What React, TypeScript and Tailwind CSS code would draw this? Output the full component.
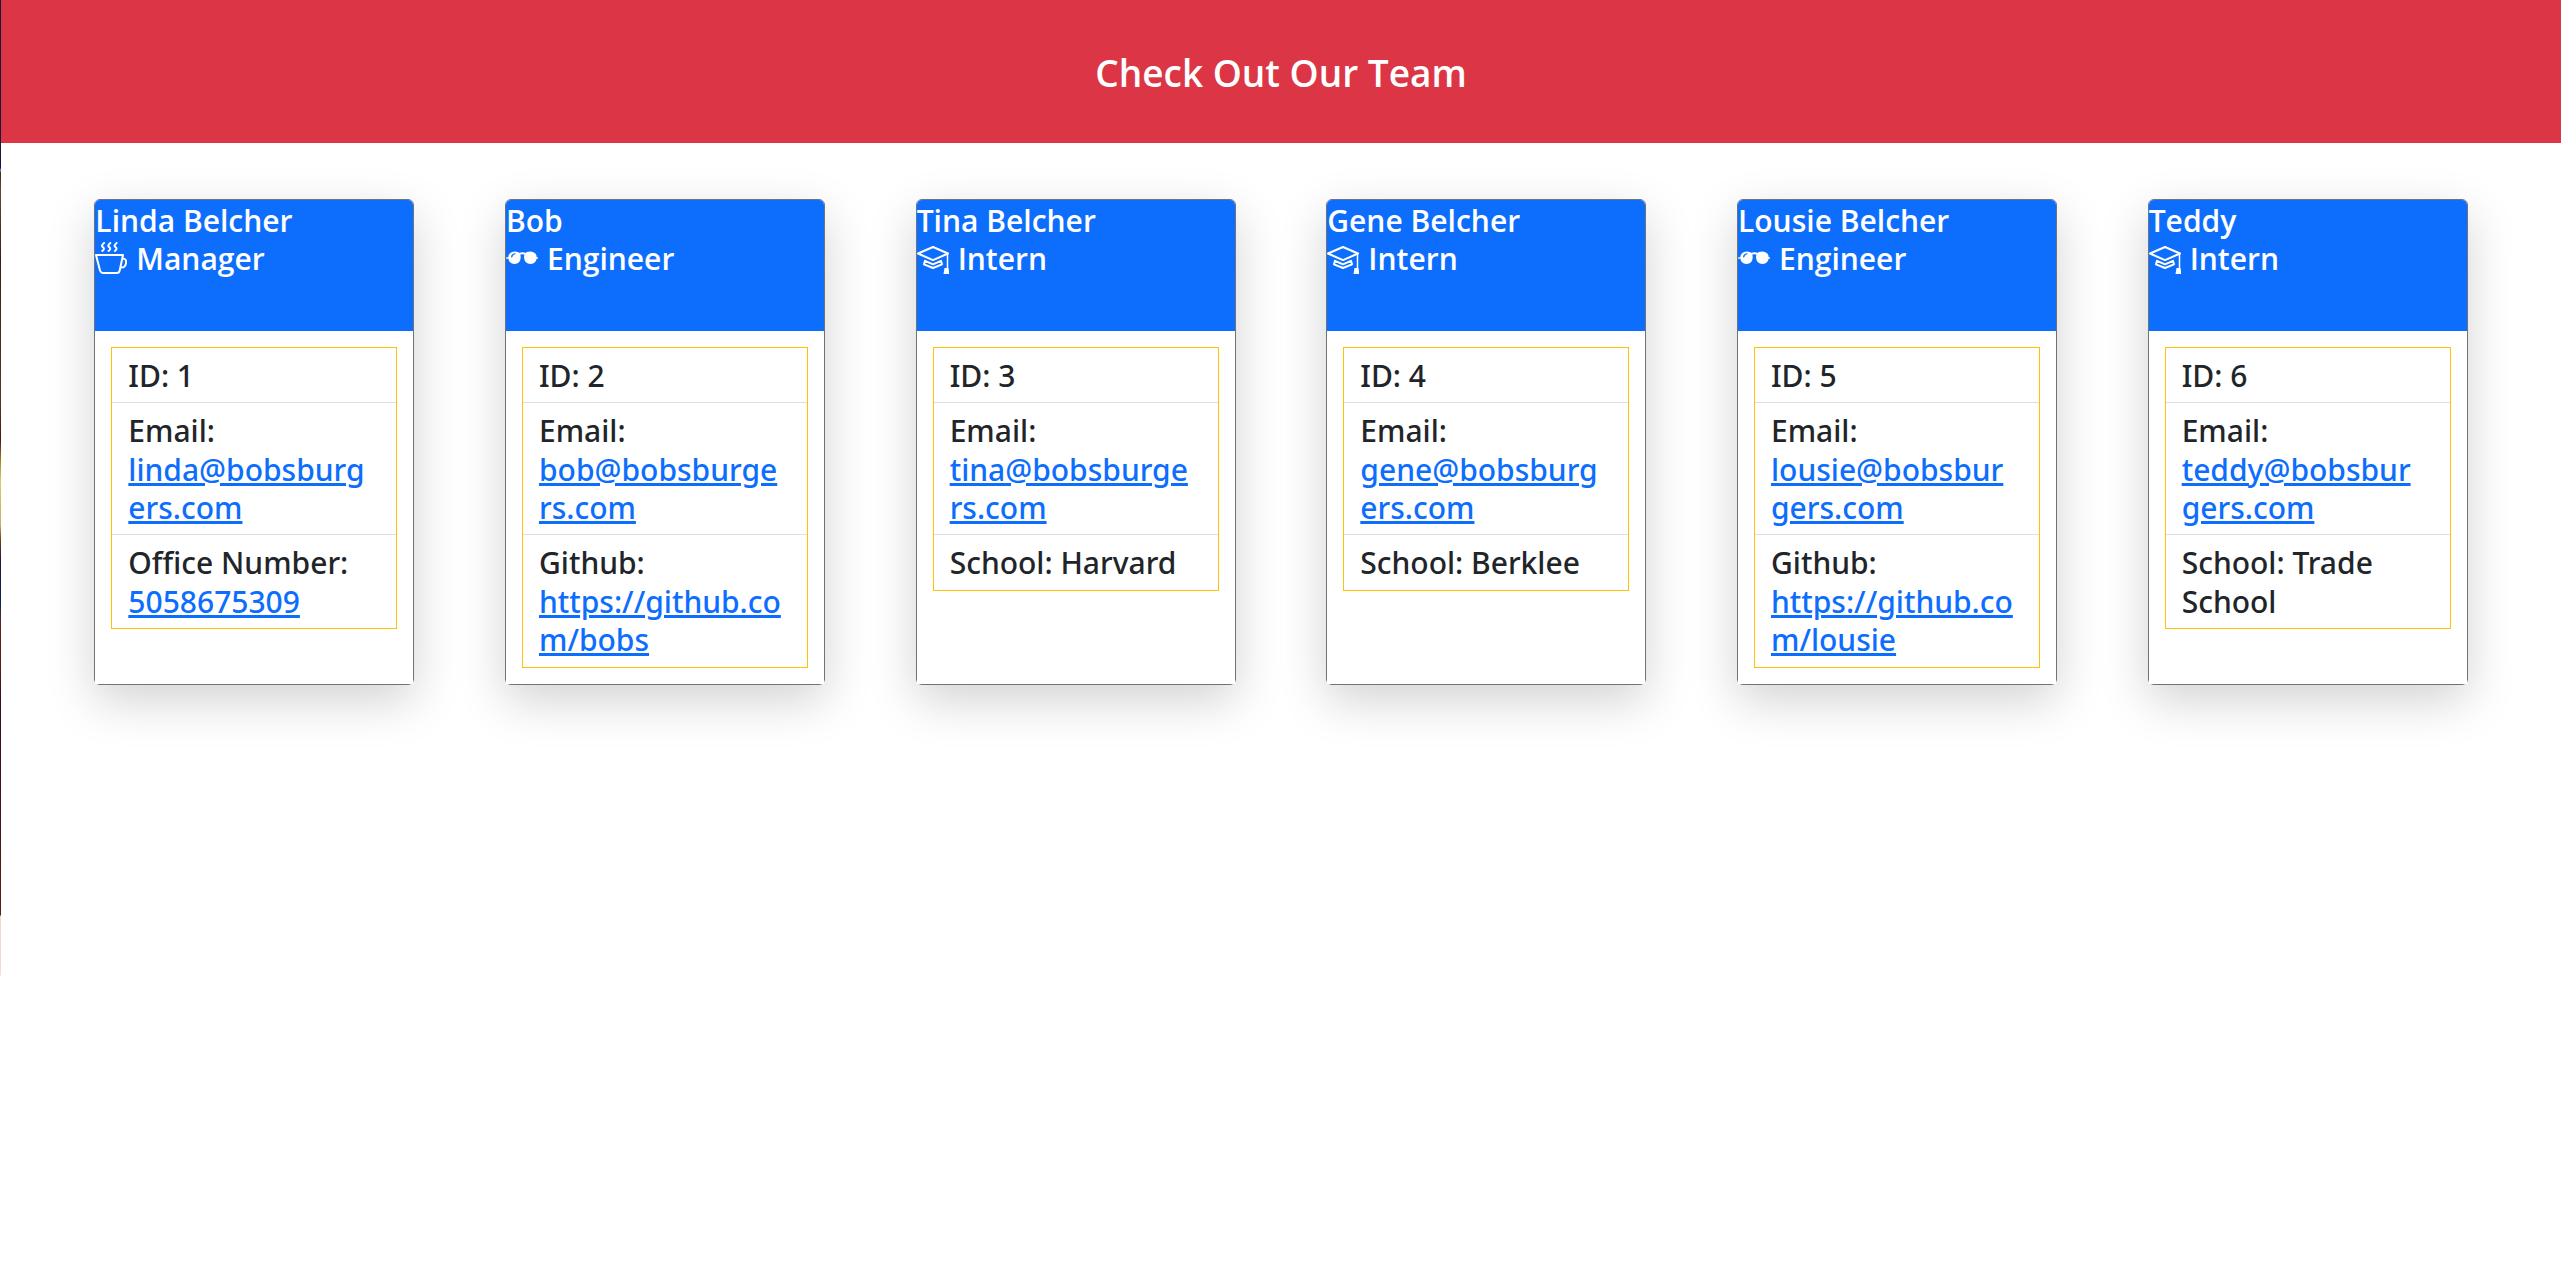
import React from "react";

type Role = "Manager" | "Engineer" | "Intern";
type Member = {
  id: number;
  name: string;
  role: Role;
  email: string;
  label: string;
  value: string;
  href?: string;
};

const team: Member[] = [
  { id: 1, name: "Linda Belcher", role: "Manager", email: "linda@bobsburgers.com", label: "Office Number", value: "5058675309", href: "tel:5058675309" },
  { id: 2, name: "Bob", role: "Engineer", email: "bob@bobsburgers.com", label: "Github", value: "https://github.com/bobs", href: "https://github.com/bobs" },
  { id: 3, name: "Tina Belcher", role: "Intern", email: "tina@bobsburgers.com", label: "School", value: "Harvard" },
  { id: 4, name: "Gene Belcher", role: "Intern", email: "gene@bobsburgers.com", label: "School", value: "Berklee" },
  { id: 5, name: "Lousie Belcher", role: "Engineer", email: "lousie@bobsburgers.com", label: "Github", value: "https://github.com/lousie", href: "https://github.com/lousie" },
  { id: 6, name: "Teddy", role: "Intern", email: "teddy@bobsburgers.com", label: "School", value: "Trade School" },
];

function RoleIcon({ role }: { role: Role }) {
  return (
    <svg viewBox="0 0 32 32" className="size-8 shrink-0" fill="none" stroke="currentColor" strokeWidth="2" strokeLinejoin="round" strokeLinecap="round" aria-hidden="true">
      {role === "Manager" && (
        <>
          <path d="M1 13h27l-3.300 15.500Q24 31 22 31H8Q6 31 5 28.500z" />
          <path d="M28 16.500c2.600.3 3.600 2.200 3 4.900-.5 2.700-2.500 4.300-5 4.200" />
          <path d="M9 1c-3 2.600-2.200 3.300-.9 4.300 1.300 1.100 1 2.300-.8 3.700M15.300 1c-3 2.600-2.200 3.300-.9 4.300 1.300 1.100 1 2.300-.8 3.700M21.600 1c-3 2.600-2.200 3.300-.9 4.300 1.300 1.100 1 2.300-.8 3.700" />
        </>
      )}
      {role === "Engineer" && (
        <>
          <path d="M.8 16h3M28.500 16h3" strokeWidth="1.500" />
          <path d="M13 12q3.300-1.500 7 0" />
          <path fillRule="evenodd" fill="currentColor" stroke="none" d="M6 10Q9 9.200 12 10q2.800 1 2.700 5.500Q14.500 22 8.500 22t-6.200-6.500Q2.400 11 6 10zM5 15.300l1.100.2Q6.500 12.900 9.500 12l-.3-1Q5.300 11.500 5 15.300z" />
          <path fill="currentColor" stroke="none" d="M21 10q3-.8 6 0 3.600 1 3.700 5.500Q30.500 22 24.500 22T18 15.500q0-4.500 3-5.500z" />
        </>
      )}
      {role === "Intern" && (
        <>
          <path d="M1 11.500 16 5l15 6.500-15 6.700z" />
          <path d="M8 18.800l8 3.500 8-3.500 1 3.500-9 3.700-9-3.700z" />
          <path d="M30.500 11.500V26" strokeWidth="1.500" />
          <path fill="currentColor" stroke="none" d="M27.500 26h4l1 6h-6z" />
        </>
      )}
    </svg>
  );
}

const linkStyle = "text-[#0d6efd] underline";
const rowStyle = "pt-[9px] pr-6 pb-[7px] pl-4";

function Card({ member }: { member: Member }) {
  return (
    <article className="flex w-80 flex-col rounded-md border border-[#6c757d] bg-white shadow-[0_16px_48px_rgba(0,0,0,0.175)]">
      <header className="rounded-t-[5px] bg-[#0d6efd] pt-0.5 pb-[52px] font-['Open_Sans',sans-serif] font-semibold text-white">
        <h2>{member.name}</h2>
        <h3 className="flex items-start gap-[9px]">
          <span className="mt-0.5">
            <RoleIcon role={member.role} />
          </span>
          {member.role}
        </h3>
      </header>
      <div className="grow bg-white p-4">
        <ul className="divide-y divide-[#dfdfdf] border border-[#ffc107] wrap-break-word text-[#212529]">
          <li className={rowStyle}>{`ID: ${member.id}`}</li>
          <li className={rowStyle}>
            {"Email: "}
            <a className={linkStyle} href={`mailto:${member.email}`}>{member.email}</a>
          </li>
          <li className={rowStyle}>
            {member.href ? (
              <>
                {`${member.label}: `}
                <a className={linkStyle} href={member.href}>{member.value}</a>
              </>
            ) : (
              `${member.label}: ${member.value}`
            )}
          </li>
        </ul>
      </div>
    </article>
  );
}

export default function App() {
  return (
    <div className="flex min-h-screen bg-white font-['Noto_Sans','Open_Sans',sans-serif] font-medium">
      <div className="h-[978px] w-px shrink-0 bg-[linear-gradient(to_bottom,#15193a_0px,#15193a_160px,#0d1560_168px,#7a94d8_170px,#4a2420_173px,#6a453c_190px,#3f1c18_260px,#5c3520_400px,#451a14_440px,#b09a20_465px,#d8c870_480px,#c8b060_525px,#6a4020_540px,#281838_560px,#0c2450_600px,#5c2424_620px,#581c1c_670px,#38101c_700px,#4a141c_820px,#582010_915px,#f0d8d0_916px,#f0ddd6_975px,#ffffff_976px)]" />
      <div className="grow">
        <header className="bg-[#dc3545] pt-[49px] pb-[47px] text-center text-white">
          <h1 className="font-['Open_Sans',sans-serif] text-[37px] leading-[47px] font-semibold">Check Out Our Team</h1>
        </header>
        <main className="grid grid-cols-6 justify-items-center px-12 pt-14 text-[30px] leading-[1.28]">
          {team.map((member) => (
            <Card key={member.id} member={member} />
          ))}
        </main>
      </div>
    </div>
  );
}
